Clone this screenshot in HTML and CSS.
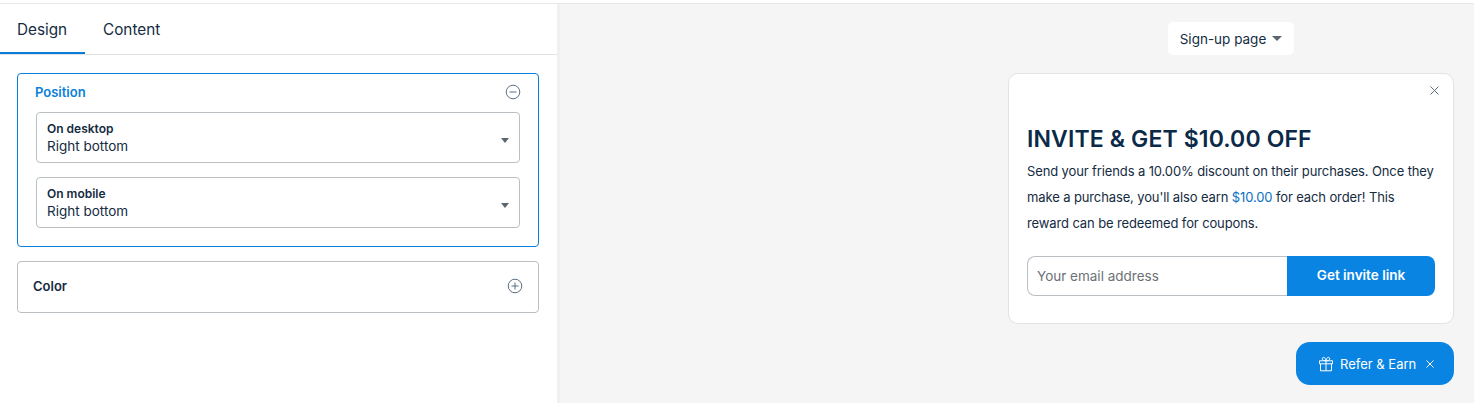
FILE: index.html
```html
<!DOCTYPE html>
<html>
  <head>
    <title>Referral widget</title>
    <link rel="stylesheet" href="styles.css">
  </head>
  <body>
  <div class="page">
    <div class="left">
      <div class="tabs">
        <a class="tab active">Design</a>
        <a class="tab">Content</a>
      </div>
      <div class="panel">
        <div class="card open">
          <div class="card-head">
            <span class="card-title">Position</span>
            <svg class="round-icon" width="16" height="16" viewBox="0 0 16 16"><circle cx="8" cy="8" r="6.800"/><path d="M4.500 8h7"/></svg>
          </div>
          <div class="select">
            <div>
              <div class="select-label">On desktop</div>
              <div class="select-value">Right bottom</div>
            </div>
            <span class="caret"></span>
          </div>
          <div class="select">
            <div>
              <div class="select-label">On mobile</div>
              <div class="select-value">Right bottom</div>
            </div>
            <span class="caret"></span>
          </div>
        </div>
        <div class="card closed">
          <span class="card-title">Color</span>
          <svg class="round-icon" width="16" height="16" viewBox="0 0 16 16"><circle cx="8" cy="8" r="6.800"/><path d="M4.500 8h7M8 4.500v7"/></svg>
        </div>
      </div>
    </div>
    <div class="right">
      <div class="preview">
        <div class="page-picker">Sign-up page <span class="caret"></span></div>
        <div class="popup">
          <div class="popup-close">
            <svg width="9" height="9" viewBox="0 0 9 9"><path d="M.5.500l8 8M8.500.500l-8 8"/></svg>
          </div>
          <h2>INVITE &amp; GET $10.00 OFF</h2>
          <p>Send your friends a 10.00% discount on their purchases. Once they make a purchase, you'll also earn <span class="money">$10.00</span> for each order! This reward can be redeemed for coupons.</p>
          <div class="invite-form">
            <div class="email">Your email address</div>
            <div class="invite-btn">Get invite link</div>
          </div>
        </div>
        <div class="refer">
          <svg class="gift" width="16" height="16" viewBox="0 0 16 16"><path d="M1.500 4.800h13v3h-13zM2.500 7.800v7h11v-7M8 4.800v10M8 4.800C6 4.800 4.300 4.200 4.300 2.700 4.300 1.500 5.500 1 6.400 1.600 7.400 2.300 8 3.800 8 4.800zM8 4.800c2 0 3.700-.6 3.700-2.100 0-1.200-1.200-1.700-2.100-1.100C8.600 2.300 8 3.800 8 4.800z"/></svg>
          <span>Refer &amp; Earn</span>
          <svg class="refer-x" width="8" height="8" viewBox="0 0 8 8"><path d="M.5.500l7 7M7.500.500l-7 7"/></svg>
        </div>
      </div>
    </div>
  </div>
  </body>
</html>
```
FILE: styles.css
```css
* {
  box-sizing: border-box;
  margin: 0;
  padding: 0;
}
html, body {
  height: 100%;
  overflow: hidden;
}
body {
  font-family: "Inter", "Open Sans", sans-serif;
  color: #142b41;
  background-color: white;
}
.page {
  display: flex;
  height: 403px;
  padding-top: 3px;
}
.left {
  width: 557px;
  border-top: 1px solid #e8e8e8;
}
.tabs {
  display: flex;
  height: 51px;
  border-bottom: 1px solid #e1e3e5;
}
.tab {
  font-size: 15.300px;
  line-height: 51px;
  height: 50px;
}
.tab:first-child {
  width: 85px;
  padding-left: 17px;
  border-bottom: 2px solid #0a7bd6;
}
.tab:last-child {
  padding-left: 18px;
}
.panel {
  padding: 18px 18px 0 17px;
}
.card {
  border: 1px solid #babfc3;
  border-radius: 4px;
}
.card.open {
  height: 174px;
  border-color: #0a80dc;
  padding: 0 18px;
}
.card.closed {
  height: 52px;
  margin-top: 14px;
  padding: 0 15px;
  display: flex;
  align-items: center;
  justify-content: space-between;
}
.closed .card-title {
  margin-top: -2px;
}
.closed .round-icon {
  margin-top: -2px;
}
.card-head {
  height: 38px;
  display: flex;
  align-items: center;
  justify-content: space-between;
  margin: 0 -1px 0 -1px;
  padding-bottom: 2px;
}
.card-head .round-icon {
  margin-top: -1px;
}
.card-title {
  font-size: 13px;
  font-weight: 600;
}
.open .card-title {
  color: #0a80dc;
}
.round-icon {
  fill: none;
  stroke: #5c6f82;
  stroke-width: 1;
}
.select {
  height: 51px;
  margin-bottom: 14px;
  border: 1px solid #babfc3;
  border-radius: 4px;
  padding: 0 10px 0 10px;
  display: flex;
  align-items: center;
  justify-content: space-between;
}
.select-label {
  font-size: 12px;
  font-weight: 600;
  line-height: 17px;
  margin-bottom: 1px;
}
.select-value {
  font-size: 13.500px;
  line-height: 17px;
}
.select .caret {
  margin-top: 5px;
  border-left-width: 4px;
  border-right-width: 4px;
}
.caret {
  display: inline-block;
  border-left: 5px solid transparent;
  border-right: 5px solid transparent;
  border-top: 5px solid #5c6670;
}
.right {
  flex: 1;
  background-color: #f5f5f5;
  border-top: 1px solid #e8e8e8;
  border-left: 3px solid #f0f0f1;
  display: flex;
  justify-content: flex-end;
  padding-right: 20px;
}
.preview {
  width: 446px;
  display: flex;
  flex-direction: column;
  align-items: center;
  padding-top: 18px;
}
.page-picker {
  width: 126px;
  height: 33px;
  background-color: white;
  border-radius: 5px;
  font-size: 13.500px;
  display: flex;
  align-items: center;
  justify-content: center;
  gap: 6px;
}
.popup {
  width: 100%;
  height: 251px;
  margin-top: 18px;
  background-color: white;
  border: 1px solid #e1e3e5;
  border-radius: 10px;
  padding: 0 18px;
}
.popup-close {
  display: flex;
  justify-content: flex-end;
  padding-top: 12px;
  height: 50px;
  margin-right: -4px;
}
.popup-close svg {
  stroke: #5c6f82;
  fill: none;
}
h2 {
  font-size: 23px;
  font-weight: 600;
  letter-spacing: 0.13px;
  line-height: 30px;
  color: #0b2a48;
}
p {
  font-size: 13px;
  letter-spacing: -0.12px;
  line-height: 26px;
  margin-top: 4px;
}
.money {
  color: #0a6fc0;
}
.invite-form {
  display: flex;
  height: 40px;
  margin-top: 20px;
}
.email {
  width: 260px;
  border: 1px solid #babfc3;
  border-right: 0;
  border-radius: 8px 0 0 8px;
  font-size: 13.500px;
  line-height: 38px;
  padding-left: 9px;
  color: #6d7175;
}
.invite-btn {
  flex: 1;
  background-color: #0a84e3;
  border-radius: 0 8px 8px 0;
  color: white;
  font-size: 13.500px;
  font-weight: 600;
  line-height: 38px;
  text-align: center;
}
.refer {
  align-self: flex-end;
  width: 158px;
  height: 43px;
  margin-top: 18px;
  background-color: #0a84e3;
  border-radius: 14px;
  color: white;
  font-size: 13px;
  display: flex;
  align-items: center;
  padding-left: 22px;
}
.gift, .refer-x {
  fill: none;
  stroke: white;
  stroke-width: 1;
}
.refer span {
  margin-left: 6px;
  margin-right: 10px;
}
```
